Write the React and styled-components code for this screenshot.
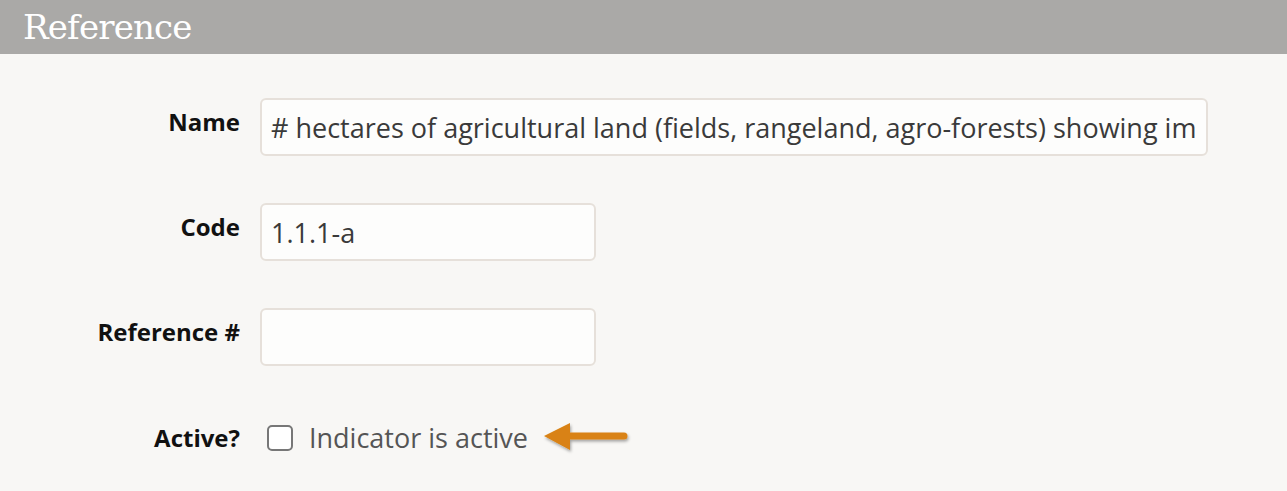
import styled, { createGlobalStyle } from 'styled-components';

const GlobalStyle = createGlobalStyle`
  body {
    margin: 0;
    background: #f8f7f5;
    font-family: "Open Sans", "Liberation Sans", sans-serif;
  }
`;

const Panel = styled.section`
  width: 1287px;
  height: 491px;
  background: #f8f7f5;
  overflow: hidden;
`;

const Header = styled.h2`
  margin: 0;
  height: 54px;
  padding-left: 23px;
  background: #aaa9a7;
  color: #fff;
  font-family: "DejaVu Serif", "Liberation Serif", serif;
  font-weight: normal;
  font-size: 34px;
  line-height: 54px;
  letter-spacing: -0.8px;
`;

const Form = styled.div`
  display: grid;
  grid-template-columns: 240px 1fr;
  column-gap: 20px;
  row-gap: 47px;
  padding-top: 44px;
`;

const Label = styled.label`
  text-align: right;
  padding-top: ${(p) => p.$top || 9}px;
  font-size: 24px;
  line-height: 30px;
  font-weight: 700;
  color: #111;
`;

const Input = styled.input`
  box-sizing: border-box;
  width: ${(p) => p.$width}px;
  height: 58px;
  padding: 0 9px;
  border: 2px solid #e6e0da;
  border-radius: 6px;
  background: #fdfdfc;
  font-family: inherit;
  font-size: 27px;
  color: #3a3a3a;
  outline: none;
`;

const CheckRow = styled.div`
  display: flex;
  align-items: center;
  height: 30px;
  margin-top: 10px;
  padding-left: 7px;
`;

const Box = styled.span`
  box-sizing: border-box;
  flex: none;
  width: 26px;
  height: 26px;
  border: 2px solid #777;
  border-radius: 5px;
  background: #fff;
`;

const CheckText = styled.span`
  margin-left: 16px;
  font-size: 27px;
  line-height: 30px;
  color: #555;
`;

const Arrow = () => (
  <svg width="96" height="40" viewBox="0 0 96 40" style={{ marginLeft: 14, flex: 'none' }}>
    <defs>
      <filter id="sh" x="-10%" y="-20%" width="130%" height="160%">
        <feDropShadow dx="1" dy="2" stdDeviation="1.5" floodColor="#000" floodOpacity="0.35" />
      </filter>
    </defs>
    <g filter="url(#sh)">
      <path d="M2 18 L28 5 L28 14.5 L82 14.5 A3.5 3.5 0 0 1 82 21.5 L28 21.5 L28 32 Z" fill="#d98213" />
    </g>
  </svg>
);

export default function App() {
  return (
    <>
      <GlobalStyle />
      <Panel>
        <Header>Reference</Header>
        <Form>
          <Label>Name</Label>
          <Input
            $width={948}
            readOnly
            value="# hectares of agricultural land (fields, rangeland, agro-forests) showing improved soil health"
          />
          <Label>Code</Label>
          <Input $width={336} readOnly value="1.1.1-a" />
          <Label>Reference #</Label>
          <Input $width={336} readOnly value="" />
          <Label $top={10}>Active?</Label>
          <CheckRow>
            <Box />
            <CheckText>Indicator is active</CheckText>
            <Arrow />
          </CheckRow>
        </Form>
      </Panel>
    </>
  );
}
